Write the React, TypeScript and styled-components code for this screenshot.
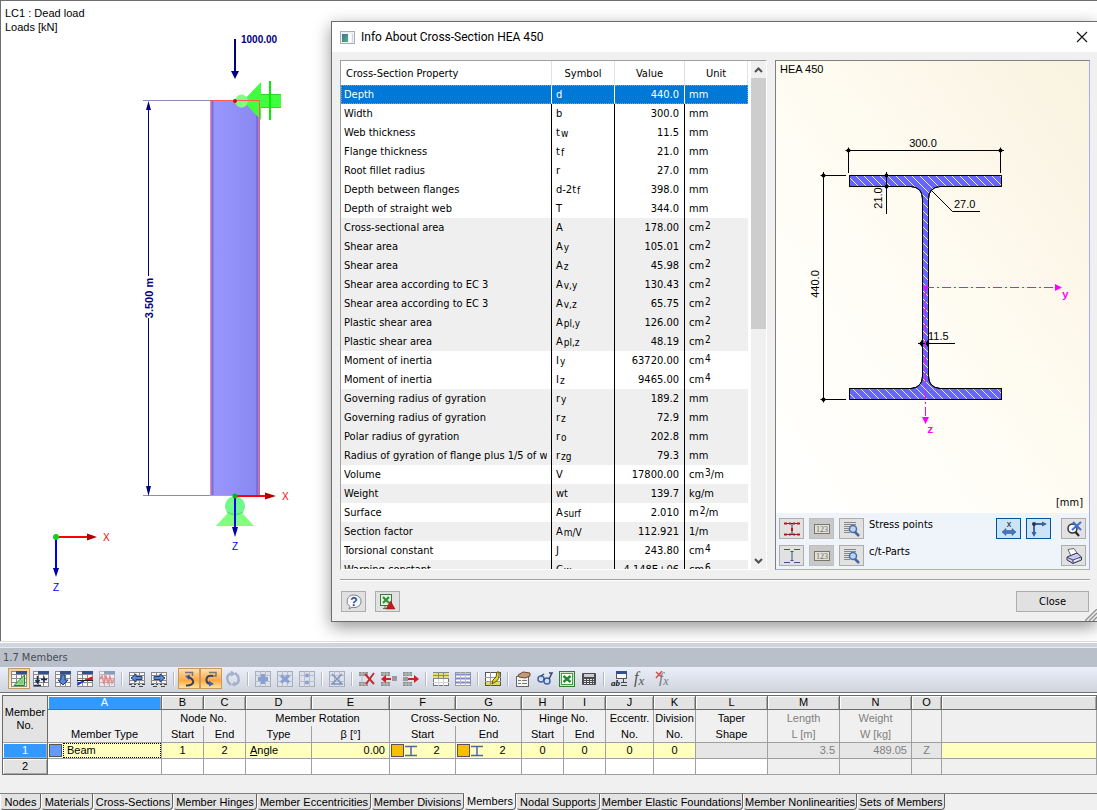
import React from "react";
import styled, { createGlobalStyle, css } from "styled-components";

const UI = `"DejaVu Sans Condensed", "DejaVu Sans", sans-serif`;
const ARIAL = `"Liberation Sans", Arial, sans-serif`;
const TITLE = `Roboto, "Open Sans", sans-serif`;

const GlobalStyle = createGlobalStyle`
  *, *::before, *::after { box-sizing: border-box; }
  body { margin: 0; background: #f0f0f0; color: #000; font-family: ${ARIAL}; font-size: 11px; }
  button { font: inherit; color: inherit; margin: 0; padding: 0; }
  svg { display: block; flex: none; }
`;

const Page = styled.div`
  display: flex;
  flex-direction: column;
  min-height: 100vh;
  overflow: hidden;
`;

/* ---------- model window ---------- */

const ModelWindow = styled.main`
  position: relative;
  flex: 1;
  background: #fff;
  border-top: 1px solid #6e6e6e;
  border-left: 1px solid #6e6e6e;
`;

const LoadCase = styled.p`
  margin: 0;
  padding: 5px 0 0 4px;
  line-height: 14px;
`;

const axisText = { fontFamily: ARIAL, fontSize: 10 };

function ModelView() {
  return (
    <svg width="330" height="606" viewBox="1 34 330 606">
      <defs>
        <linearGradient id="column" x1="0" x2="1" y1="0" y2="0">
          <stop offset="0" stopColor="#9898fc" />
          <stop offset="0.5" stopColor="#9090f8" />
          <stop offset="1" stopColor="#8787ee" />
        </linearGradient>
      </defs>
      <path d="M143 100.500H210M143 495.500H210" stroke="#8c8cb4" fill="none" />
      <rect x="210" y="101" width="50" height="395" fill="url(#column)" />
      <path d="M212.500 101V495M257 101V495" stroke="#7272dc" strokeWidth="2" />
      <path d="M210.500 100V496M210 495.500H260" stroke="#ff7f9f" fill="none" />
      <path d="M148.500 103V276M148.500 318V493" stroke="#000080" />
      <path d="M148.500 101L146 110H151ZM148.500 496L146 486H151Z" fill="#000080" />
      <text x="153" y="298" transform="rotate(-90 153 298)" textAnchor="middle" fontFamily={ARIAL} fontSize="11" fontWeight="bold" fill="#000080">3.500 m</text>
      <path d="M235 39V73" stroke="#000080" strokeWidth="2" />
      <path d="M231 71H239L235 79Z" fill="#000080" />
      <text x="241" y="43" fontFamily={ARIAL} fontSize="10" fontWeight="bold" fill="#000080">1000.00</text>
      <path d="M243 101L261 82V120Z" fill="#3fff3f" />
      <rect x="261" y="94" width="20" height="14" fill="#3fff3f" />
      <path d="M261 94.500H281M261 107.500H281" stroke="#32d832" />
      <path d="M270 81V120" stroke="#00f000" strokeWidth="2" />
      <circle cx="241.500" cy="101" r="6.500" fill="#80ff80" />
      <path d="M210 100.500H259.500V496" stroke="#ff5a5a" fill="none" />
      <circle cx="235" cy="101" r="2" fill="#c01010" />
      <path d="M235 505L216 526H254Z" fill="#80ff80" />
      <circle cx="235" cy="506" r="10" fill="#72f88a" />
      <path d="M227 512Q235 517 243 512" stroke="#40e060" fill="none" />
      <path d="M235 496H266" stroke="#f00" strokeWidth="2" />
      <path d="M265 492.500L276 496L265 499.500Z" fill="#b00000" />
      <path d="M235 496V530" stroke="#00f" strokeWidth="2" />
      <path d="M232 527H238L235 537Z" fill="#0000b0" />
      <circle cx="235" cy="496" r="2.500" fill="#10b020" />
      <text x="282" y="500" style={axisText} fill="#f00">X</text>
      <text x="232" y="550" style={axisText} fill="#00f">Z</text>
      <path d="M56 537H88" stroke="#f00" strokeWidth="2" />
      <path d="M87 533.500L97 537L87 540.500Z" fill="#b00000" />
      <path d="M56 537V570" stroke="#00f" strokeWidth="2" />
      <path d="M53 568H59L56 577Z" fill="#0000b0" />
      <circle cx="56" cy="537" r="3" fill="#10d020" />
      <text x="103" y="541" style={axisText} fill="#f00">X</text>
      <text x="53" y="591" style={axisText} fill="#00f">Z</text>
    </svg>
  );
}

/* ---------- dialog ---------- */

const Dialog = styled.section`
  position: absolute;
  top: 20px;
  left: 330px;
  right: 0;
  bottom: 19px;
  display: flex;
  flex-direction: column;
  background: #f0f0f0;
  border: 1px solid #6c6c6c;
  border-right: 0;
  box-shadow: 0 5px 16px rgba(0, 0, 0, 0.42);
  font-family: ${UI};
`;

const TitleBar = styled.header`
  display: flex;
  align-items: center;
  gap: 6px;
  height: 30px;
  flex: none;
  padding: 0 9px 0 8px;
  background: #fff;
`;

const Title = styled.h1`
  flex: 1;
  margin: 0;
  font: 12px ${TITLE};
`;

const PlainButton = styled.button`
  display: grid;
  place-items: center;
  border: 0;
  background: none;
`;

const DialogBody = styled.div`
  display: flex;
  gap: 8px;
  flex: 1;
  min-height: 0;
  padding: 8px 7px 9px 8px;
`;

const PropertyPane = styled.div`
  display: flex;
  width: 427px;
  flex: none;
  background: #fff;
  border-top: 1px solid #a0a0a0;
  border-left: 1px solid #a0a0a0;
  border-right: 1px solid #fff;
  border-bottom: 1px solid #fff;
`;

const TableClip = styled.div`
  flex: 1;
  overflow: hidden;
`;

const PropertyTable = styled.table`
  width: 407px;
  table-layout: fixed;
  border-collapse: separate;
  border-spacing: 0;
  line-height: 18px;
  white-space: nowrap;
  th {
    height: 24px;
    padding: 1px 0 0;
    font-weight: normal;
    border-right: 1px solid #e2e2e2;
  }
  th:first-child { text-align: left; padding-left: 5px; }
`;

const PropertyRow = styled.tr<{ $shaded?: boolean; $selected?: boolean }>`
  background: ${(p) => (p.$shaded ? "#efefef" : "#fff")};
  td {
    height: 19px;
    padding: 1px 4px 0;
    border-right: 1px solid #000;
  }
  td:first-child { padding-left: 3px; }
  td:nth-child(3) { text-align: right; padding-right: 5px; }
  td:last-child { border-right: 0; }
  ${(p) =>
    p.$selected &&
    css`
      background: #0078d7;
      color: #fff;
      td {
        border-right-color: #fff;
        border-top: 1px dotted #e8873a;
        border-bottom: 1px dotted #e8873a;
        line-height: 16px;
      }
      td:first-child { border-left: 1px dotted #e8873a; padding-left: 2px; }
      td:last-child { border-right: 1px dotted #e8873a; }
    `}
`;

const CellClip = styled.div`
  overflow: hidden;
`;

const Sub = styled.sub`
  margin-left: 1px;
  font-size: 10px;
  line-height: 1;
  vertical-align: -1px;
`;

const Sup = styled.sup`
  margin-left: 1px;
  font-size: 10px;
  line-height: 1;
  vertical-align: 2px;
`;

const ScrollBar = styled.div`
  display: flex;
  flex-direction: column;
  width: 15px;
  margin-left: 3px;
  background: #f0f0f0;
`;

const ScrollButton = styled(PlainButton)`
  height: 17px;
  flex: none;
`;

const ScrollTrack = styled.div`
  flex: 1;
`;

const ScrollThumb = styled.div`
  height: 53%;
  background: #cdcdcd;
`;

const SectionPane = styled.div`
  display: flex;
  flex-direction: column;
  flex: 1;
  min-width: 0;
  border: 1px solid #a9ace8;
  border-top-color: #808080;
  border-left-color: #808080;
`;

const SectionCanvas = styled.div`
  flex: 1;
  min-height: 0;
  overflow: hidden;
  background: linear-gradient(to top right, #ffffff 0%, #fffdf4 45%, #f9f2e0 100%);
`;

const SectionTools = styled.div`
  display: flex;
  justify-content: space-between;
  flex: none;
  padding: 5px 3px 3px;
  background: #eff3fa;
`;

const ToolGrid = styled.div<{ $cols: string }>`
  display: grid;
  grid-template-columns: ${(p) => p.$cols};
  gap: 6px 5px;
`;

const ToolLabel = styled.span`
  line-height: 13px;
`;

const IconButton = styled.button<{ $on?: boolean; $dim?: boolean }>`
  display: grid;
  place-items: center;
  width: 25px;
  height: 21px;
  border: 1px solid ${(p) => (p.$on ? "#00559b" : p.$dim ? "#bfbfbf" : "#adadad")};
  background: ${(p) => (p.$on ? "#cce4f7" : p.$dim ? "#c8c8c8" : "#e1e1e1")};
`;

const DialogFooter = styled.footer`
  display: flex;
  gap: 9px;
  flex: none;
  margin: 0 7px 0 8px;
  padding: 11px 1px 9px;
  border-top: 1px solid #a0a0a0;
  box-shadow: inset 0 1px 0 #fff;
`;

const CloseButton = styled.button`
  width: 73px;
  height: 21px;
  margin-left: auto;
  border: 1px solid #adadad;
  background: #e1e1e1;
`;

const Grip = styled.div`
  position: absolute;
  right: 0;
  bottom: 0;
`;

type Prop = [string, React.ReactNode, string, React.ReactNode, boolean];

const cm = (n: number) => <>cm<Sup>{n}</Sup></>;
const sy = (a: string, b: string) => <>{a}<Sub>{b}</Sub></>;

const properties: Prop[] = [
  ["Depth", "d", "440.0", "mm", false],
  ["Width", "b", "300.0", "mm", false],
  ["Web thickness", sy("t", "w"), "11.5", "mm", false],
  ["Flange thickness", sy("t", "f"), "21.0", "mm", false],
  ["Root fillet radius", "r", "27.0", "mm", false],
  ["Depth between flanges", sy("d-2t", "f"), "398.0", "mm", false],
  ["Depth of straight web", "T", "344.0", "mm", false],
  ["Cross-sectional area", "A", "178.00", cm(2), true],
  ["Shear area", sy("A", "y"), "105.01", cm(2), true],
  ["Shear area", sy("A", "z"), "45.98", cm(2), true],
  ["Shear area according to EC 3", sy("A", "v,y"), "130.43", cm(2), true],
  ["Shear area according to EC 3", sy("A", "v,z"), "65.75", cm(2), true],
  ["Plastic shear area", sy("A", "pl,y"), "126.00", cm(2), true],
  ["Plastic shear area", sy("A", "pl,z"), "48.19", cm(2), true],
  ["Moment of inertia", sy("I", "y"), "63720.00", cm(4), false],
  ["Moment of inertia", sy("I", "z"), "9465.00", cm(4), false],
  ["Governing radius of gyration", sy("r", "y"), "189.2", "mm", true],
  ["Governing radius of gyration", sy("r", "z"), "72.9", "mm", true],
  ["Polar radius of gyration", sy("r", "o"), "202.8", "mm", true],
  ["Radius of gyration of flange plus 1/5 of web", sy("r", "zg"), "79.3", "mm", true],
  ["Volume", "V", "17800.00", <>cm<Sup>3</Sup>/m</>, false],
  ["Weight", "wt", "139.7", "kg/m", true],
  ["Surface", sy("A", "surf"), "2.010", <>m<Sup>2</Sup>/m</>, false],
  ["Section factor", sy("A", "m/V"), "112.921", "1/m", true],
  ["Torsional constant", "J", "243.80", cm(4), false],
  ["Warping constant", sy("C", "w"), "4.148E+06", cm(6), true],
];

function DimPoint({ x, y }: { x: number; y: number }) {
  return (
    <g>
      <path d={`M${x - 3} ${y}H${x + 3}M${x} ${y - 3}V${y + 3}`} stroke="#000" />
      <circle cx={x} cy={y} r="2" fill="#000" />
    </g>
  );
}

function SectionDrawing() {
  return (
    <svg width="100%" height="100%" viewBox="776 61 313 452" fontFamily={ARIAL} fontSize="11">
      <defs>
        <pattern id="hatch" width="8" height="8" patternUnits="userSpaceOnUse">
          <path d="M-1 -1L9 9M-1 7L1 9M7 -1L9 1" stroke="#e4e4ff" strokeWidth="1" />
        </pattern>
      </defs>
      <text x="780" y="73">HEA 450</text>
      {["#6666ff", "url(#hatch)"].map((fill) => (
        <path
          key={fill}
          d="M849.500 175.500H1001.500V186.500H940Q928.500 187.500 928.500 199V376Q928.500 387.500 940 388.500H1001.500V399.500H849.500V388.500H911Q922.500 387.500 922.500 376V199Q922.500 187.500 911 186.500H849.500Z"
          fill={fill}
          stroke="#000"
        />
      ))}
      <g stroke="#000" fill="none">
        <path d="M846 150.500H1004M848.500 150V173M1000.500 150V173" />
        <path d="M823.500 172V402M823 175.500H846M823 399.500H846" />
        <path d="M886.500 172V214" />
        <path d="M931 190L952.500 211.500H980" />
        <path d="M918 343.500H955" />
      </g>
      <DimPoint x={848.5} y={150.5} />
      <DimPoint x={1000.5} y={150.5} />
      <DimPoint x={823.5} y={175.5} />
      <DimPoint x={823.5} y={399.5} />
      <DimPoint x={886.5} y={175.5} />
      <DimPoint x={886.5} y={186.5} />
      <DimPoint x={921.5} y={343.5} />
      <DimPoint x={927.5} y={343.5} />
      <text x="923" y="147" textAnchor="middle">300.0</text>
      <text x="819" y="284" textAnchor="middle" transform="rotate(-90 819 284)">440.0</text>
      <text x="882" y="198" textAnchor="middle" transform="rotate(-90 882 198)">21.0</text>
      <text x="954" y="208">27.0</text>
      <text x="928" y="340">11.5</text>
      <g stroke="#f0f" strokeDasharray="9 3 2 3">
        <path d="M925 287.500H1055" />
        <path d="M925.500 288V417" />
      </g>
      <circle cx="925.500" cy="287.500" r="2" fill="#f0f" />
      <path d="M1055 284L1062 287.500L1055 291ZM922 417H929L925.500 424Z" fill="#f0f" />
      <g fill="#f0f" fontFamily="'Liberation Mono', monospace" fontWeight="bold" fontSize="11">
        <text x="1062" y="298">y</text>
        <text x="927" y="433">z</text>
      </g>
      <text x="1083" y="506" textAnchor="end" fontFamily={UI}>[mm]</text>
    </svg>
  );
}

const Ic = ({ children, size = 16 }: { children: React.ReactNode; size?: number }) => (
  <svg width={size} height="16" viewBox={`0 0 ${size} 16`} fill="none">{children}</svg>
);

const StressPointsIcon = () => (
  <Ic>
    <path d="M1 2.500H15M1 13.500H15M8 3V13" stroke="#303860" />
    <path d="M0 1.500h3v2h-3zM5 1.500h2v2h-2zM9 1.500h2v2h-2zM13 1.500h3v2h-3zM0 12.500h3v2h-3zM5 12.500h2v2h-2zM9 12.500h2v2h-2zM13 12.500h3v2h-3zM7 7h2v3h-2z" fill="#d01010" />
  </Ic>
);
const PartsIcon = () => (
  <Ic><path d="M0 1.500H6M10 1.500H16M0 14.500H6M10 14.500H16M8 4V12M6.500 3.500H9.500M6.500 12.500H9.500" stroke="#405080" /></Ic>
);
const NumbersIcon = () => (
  <Ic>
    <rect x="0.500" y="3.500" width="15" height="9" fill="#e2e2da" stroke="#77776f" />
    <text x="8" y="11" textAnchor="middle" fontSize="8" fontFamily="'Liberation Serif', serif" fill="#66665f">123</text>
  </Ic>
);
const DetailIcon = () => (
  <Ic>
    <path d="M0 1.500H12M0 3.500H12M0 5.500H6M0 7.500H5M0 9.500H5M0 11.500H6" stroke="#888" />
    <circle cx="9" cy="8" r="3.500" fill="#b8d4f4" stroke="#4c6ea8" strokeWidth="1.500" />
    <path d="M11 11L15 15" stroke="#4a63a0" strokeWidth="2.500" />
  </Ic>
);
const WidthIcon = () => (
  <Ic>
    <text x="8" y="6" textAnchor="middle" fontSize="9" fontFamily={ARIAL} fill="#111">x</text>
    <path d="M1 11L5 7.500V9.500H11V7.500L15 11L11 14.500V12.500H5V14.500Z" fill="#4a74b8" stroke="#2f4f8c" strokeWidth="0.500" />
  </Ic>
);
const AxesIcon = () => (
  <Ic>
    <path d="M3 3H12M3 3V12" stroke="#3f64a8" strokeWidth="2" />
    <path d="M11 0.500L16 3L11 5.500ZM0.500 11L3 16L5.500 11Z" fill="#3f5f98" />
    <circle cx="3" cy="3" r="2" fill="#334" />
  </Ic>
);
const ZoomResetIcon = () => (
  <Ic>
    <circle cx="6.500" cy="7.500" r="4.500" fill="#f4f8ff" stroke="#333" strokeWidth="1.500" />
    <path d="M9.500 11L13 15" stroke="#222" strokeWidth="2" />
    <path d="M7 1L15 9M15 1L6 9" stroke="#3f6fd0" strokeWidth="2" />
  </Ic>
);
const PrinterIcon = () => (
  <Ic>
    <path d="M2 1.500L8 0.500L11 5L5 8Z" fill="#fff" stroke="#667" />
    <path d="M1 9L11 5L15.500 9V12L7 15.500L1 12Z" fill="#c9c9f4" stroke="#334" />
    <path d="M1.500 9.500L7 12L15 9M7 12V15" stroke="#446" />
    <path d="M8 13L13 11" stroke="#fff" />
  </Ic>
);
const HelpIcon = () => (
  <Ic>
    <path d="M8 1A7 6.300 0 1 1 6 13.300L3 15L4 12.500A7 6.300 0 0 1 8 1Z" fill="#f6f8fc" stroke="#7c8088" />
    <text x="8" y="12" textAnchor="middle" fontSize="12" fontWeight="bold" fontFamily={ARIAL} fill="#2b4a8c">?</text>
  </Ic>
);
const ExportIcon = () => (
  <Ic>
    <rect x="0.500" y="0.500" width="11" height="11" fill="#e4f2e0" stroke="#3d7a3d" />
    <path d="M3 3L9 9M9 3L3 9" stroke="#2f8a3a" strokeWidth="2" />
    <path d="M6 15L10.500 7L15 15Z" fill="#c81818" stroke="#801010" strokeWidth="0.500" />
    <path d="M5 11.500V14M3 14.500H6" stroke="#3d7a3d" />
  </Ic>
);

function CrossSectionDialog() {
  return (
    <Dialog role="dialog" aria-labelledby="dialog-title">
      <TitleBar>
        <svg width="15" height="13" viewBox="0 0 15 13">
          <defs>
            <linearGradient id="app-icon" x1="0" x2="1" y1="0" y2="1">
              <stop offset="0" stopColor="#3f6fa8" />
              <stop offset="1" stopColor="#58b06c" />
            </linearGradient>
          </defs>
          <rect x="0.500" y="0.500" width="14" height="12" fill="#eef2f6" stroke="#a9aeb6" />
          <rect x="2" y="3" width="6" height="8" fill="url(#app-icon)" />
          <rect x="9" y="3" width="2" height="8" fill="#fff" />
          <rect x="12" y="3" width="1" height="8" fill="#cdd6e2" />
        </svg>
        <Title id="dialog-title">Info About Cross-Section HEA 450</Title>
        <PlainButton aria-label="Close window">
          <svg width="12" height="12" viewBox="0 0 12 12"><path d="M1 1L11 11M11 1L1 11" stroke="#111" strokeWidth="1.100" /></svg>
        </PlainButton>
      </TitleBar>
      <DialogBody>
        <PropertyPane>
          <TableClip>
            <PropertyTable>
              <colgroup>
                <col style={{ width: 211 }} />
                <col style={{ width: 63 }} />
                <col style={{ width: 70 }} />
                <col />
              </colgroup>
              <thead>
                <tr><th>Cross-Section Property</th><th>Symbol</th><th>Value</th><th>Unit</th></tr>
              </thead>
              <tbody>
                {properties.map(([name, symbol, value, unit, shaded], i) => (
                  <PropertyRow key={i} $shaded={shaded} $selected={i === 0}>
                    <td><CellClip>{name}</CellClip></td>
                    <td>{symbol}</td>
                    <td>{value}</td>
                    <td>{unit}</td>
                  </PropertyRow>
                ))}
              </tbody>
            </PropertyTable>
          </TableClip>
          <ScrollBar>
            <ScrollButton aria-label="Scroll up">
              <svg width="9" height="6" viewBox="0 0 9 6"><path d="M1 5L4.500 1.500L8 5" stroke="#505050" strokeWidth="2" fill="none" /></svg>
            </ScrollButton>
            <ScrollTrack><ScrollThumb /></ScrollTrack>
            <ScrollButton aria-label="Scroll down">
              <svg width="9" height="6" viewBox="0 0 9 6"><path d="M1 1L4.500 4.500L8 1" stroke="#505050" strokeWidth="2" fill="none" /></svg>
            </ScrollButton>
          </ScrollBar>
        </PropertyPane>
        <SectionPane>
          <SectionCanvas><SectionDrawing /></SectionCanvas>
          <SectionTools>
            <ToolGrid $cols="25px 25px 25px auto">
              <IconButton aria-label="Show stress points"><StressPointsIcon /></IconButton>
              <IconButton aria-label="Stress point numbers" $dim><NumbersIcon /></IconButton>
              <IconButton aria-label="Stress point details"><DetailIcon /></IconButton>
              <ToolLabel>Stress points</ToolLabel>
              <IconButton aria-label="Show c/t-parts"><PartsIcon /></IconButton>
              <IconButton aria-label="Part numbers" $dim><NumbersIcon /></IconButton>
              <IconButton aria-label="Part details"><DetailIcon /></IconButton>
              <ToolLabel>c/t-Parts</ToolLabel>
            </ToolGrid>
            <ToolGrid $cols="25px 30px 25px">
              <IconButton aria-label="Show dimensions" $on><WidthIcon /></IconButton>
              <IconButton aria-label="Show axes" $on><AxesIcon /></IconButton>
              <IconButton aria-label="Reset zoom"><ZoomResetIcon /></IconButton>
              <span />
              <span />
              <IconButton aria-label="Print"><PrinterIcon /></IconButton>
            </ToolGrid>
          </SectionTools>
        </SectionPane>
      </DialogBody>
      <DialogFooter>
        <IconButton aria-label="Help"><HelpIcon /></IconButton>
        <IconButton aria-label="Export to spreadsheet"><ExportIcon /></IconButton>
        <CloseButton>Close</CloseButton>
      </DialogFooter>
      <Grip>
        <svg width="12" height="12" viewBox="0 0 12 12">
          <path d="M0 12L12 0M4 12L12 4M8 12L12 8" stroke="#909090" strokeWidth="1.400" />
        </svg>
      </Grip>
    </Dialog>
  );
}

/* ---------- tool bar ---------- */

const Panel = styled.section`
  flex: none;
  border-top: 1px solid #dcdde0;
  background: #f0f0f0;
`;

const Splitter = styled.div`
  height: 6px;
  background: #d0d4df;
  border-top: 1px solid #fff;
  border-bottom: 1px solid #e9ebf2;
`;

const PanelTitle = styled.h2`
  margin: 0;
  padding-left: 3px;
  background: #b9c0ca;
  color: #484c54;
  font: 11px/19px ${UI};
`;

const ToolBar = styled.div`
  display: flex;
  align-items: flex-start;
  height: 26px;
  padding: 1px 0 0 8px;
  background: linear-gradient(#eaeef9, #d0d4dd);
  border-bottom: 1px solid #707070;
`;

const Tool = styled.button<{ $tone?: "pale" | "warm" }>`
  display: grid;
  place-items: center;
  width: 22px;
  height: 21px;
  border: 1px solid transparent;
  background: none;
  ${(p) =>
    p.$tone &&
    css`
      border-color: #c29a62;
      background: ${p.$tone === "warm"
        ? "linear-gradient(#fde0b8, #ffbe6e 35%, #ffa940 60%, #ffe49c)"
        : "linear-gradient(#f0cf9c, #fdf0d4)"};
    `}
`;

const ToolSeparator = styled.span`
  width: 8px;
  height: 14px;
  margin-top: 4px;
  background: linear-gradient(90deg, transparent 3px, #b4b9c4 3px, #b4b9c4 4px, #fff 4px, #fff 5px, transparent 5px);
`;

const Grid = ({ faded, lines = "#8a8a8a" }: { faded?: boolean; lines?: string }) => (
  <g opacity={faded ? 0.5 : 1}>
    <rect x="0.500" y="0.500" width="15" height="15" fill="#f8f8f8" stroke={lines} />
    <path d="M0 3.500H16M0 7.500H16M0 11.500H16M5.500 0V16M10.500 3V16" stroke={lines} />
    <rect x="5" y="0" width="11" height="3" fill="#33508c" />
  </g>
);

const FilmGrid = () => (
  <>
    <rect x="0.500" y="1.500" width="15" height="11" fill="#f6f6f6" stroke="#888" />
    <path d="M0 4.500H16M0 9.500H16M5.500 1V13M10.500 1V13" stroke="#888" />
    <path d="M0 13.500H3M5 13.500H7M9 13.500H11M13 13.500H16M2 15.500H6M10 15.500H14" stroke="#444" />
  </>
);

const PaleGrid = () => (
  <>
    <rect x="0.500" y="0.500" width="15" height="15" fill="#dde1ea" stroke="#a8adb8" />
    <path d="M0 4.500H16M0 10.500H16M5.500 0V16M10.500 0V16" stroke="#b8bdc8" />
  </>
);

const RowStub = () => (
  <>
    <path d="M0 1H9V5H0ZM0 11H9V15H0Z" fill="#8d8d8d" />
    <path d="M0 3H9M0 13H9M3 1V15M6 1V5M6 11V15" stroke="#bbb" />
  </>
);

const tools: (null | { name: string; tone?: "pale" | "warm"; icon: React.ReactNode })[] = [
  { name: "Graphic input", tone: "pale", icon: <><Grid /><path d="M3 14.500L13.500 4V14.500Z" fill="#8fe08f" stroke="#2f7f2f" /><path d="M8.500 12H11V9.500Z" fill="#f4fff4" stroke="#2f7f2f" strokeWidth="0.500" /></> },
  { name: "Insert values", icon: <><Grid /><path d="M4.500 5V11M2.500 9L4.500 12L6.500 9M1 14.500H8M8 8.500H14M11 5.500V11.500" stroke="#1d2c50" strokeWidth="1.500" /></> },
  { name: "Apply to model", icon: <><Grid /><path d="M6 4H10V9H13L8 14L3 9H6Z" fill="#5b86d4" stroke="#23417f" /></> },
  { name: "Diagram", icon: <><Grid /><path d="M1 14L1 12L7 10Z" fill="#1030e0" stroke="#1030e0" /><path d="M8 9L15 6V9Z" fill="#e01818" stroke="#e01818" /><path d="M0 9.500H16" stroke="#222" /></> },
  { name: "Oscillation", icon: <><Grid faded /><path d="M0 9L3 5L5 13L7 5L9 12L11 6L13 12L15 8" stroke="#e88a8a" strokeWidth="1.500" /></> },
  null,
  { name: "Previous table", icon: <><FilmGrid /><path d="M2 7L7 3V5.500H13V8.500H7V11Z" fill="#5b86d4" stroke="#23417f" /></> },
  { name: "Next table", icon: <><FilmGrid /><path d="M14 7L9 3V5.500H3V8.500H9V11Z" fill="#5b86d4" stroke="#23417f" /></> },
  null,
  { name: "Redo selection", tone: "warm", icon: <><path d="M4 1.500H11.500V5" stroke="#777" strokeWidth="1.500" /><path d="M4 5L9 3.500L8 9Z" fill="#3f68b4" /><path d="M7 6Q13 8 12 12Q10 15 5 14.500" stroke="#33435f" strokeWidth="2" /></> },
  { name: "Sync selection", tone: "warm", icon: <><path d="M6 1.500H13V5H9" stroke="#777" strokeWidth="1.500" /><path d="M10 5Q4 4 3.500 8Q3 12 7 13" stroke="#33435f" strokeWidth="2" /><path d="M6 9.500L11 13L6 15.500Z" fill="#3f68b4" /></> },
  { name: "Refresh", icon: <g stroke="#a4b0c8" strokeWidth="2.500"><path d="M8 2Q1 3 2.500 9Q3 12 6 14" /><path d="M8 14Q15 13 13.500 7Q13 4 10 2" /><path d="M6 0L9 3L6 5M10 11L7 14" strokeWidth="1.500" /></g> },
  null,
  { name: "Add row", icon: <><PaleGrid /><path d="M8 3V13M3 8H13" stroke="#8aa0d4" strokeWidth="4" /></> },
  { name: "Multiply row", icon: <><PaleGrid /><path d="M4 4.500L12 11.500M12 4.500L4 11.500" stroke="#8aa0d4" strokeWidth="3" /></> },
  { name: "Divide row", icon: <><PaleGrid /><circle cx="8" cy="4.500" r="2" fill="#8aa0d4" /><circle cx="8" cy="11.500" r="2" fill="#8aa0d4" /></> },
  null,
  { name: "Clear table", icon: <><PaleGrid /><path d="M3 3L13 13M13 3L3 13M2 13H14" stroke="#7f92bf" strokeWidth="1.500" /></> },
  null,
  { name: "Delete row", icon: <><RowStub /><path d="M6 3L15 13M15 2L7 13" stroke="#c03030" strokeWidth="2" /></> },
  { name: "Insert row left", icon: <><RowStub /><path d="M3 8H10" stroke="#d02020" strokeWidth="2" /><path d="M0 8L5 4V12Z" fill="#d02020" /><rect x="11" y="5" width="5" height="5" fill="#9a9a9a" /></> },
  { name: "Insert row right", icon: <><RowStub /><path d="M5 8H13" stroke="#d02020" strokeWidth="2" /><path d="M16 8L11 4V12Z" fill="#d02020" /><rect x="0" y="6" width="5" height="4" fill="#9a9a9a" /></> },
  null,
  { name: "Highlight header", icon: <><rect x="0.500" y="1.500" width="15" height="13" fill="#fff" stroke="#777" /><rect x="0" y="1" width="16" height="6" fill="#e8df6c" /><path d="M0 1.500H16M0 4.500H16M0 7.500H16M5.500 1V7M10.500 1V7" stroke="#888" /><path d="M0 11.500H16M5.500 8V15M10.500 8V15" stroke="#d4d4d4" /></> },
  { name: "Highlight rows", icon: <><rect x="0.500" y="1.500" width="15" height="13" fill="#fff" stroke="#999" /><path d="M0 3.500H16M0 7.500H16M0 11.500H16" stroke="#8088c8" strokeWidth="2" /><path d="M5.500 1V15M10.500 1V15" stroke="#b8b8c8" /></> },
  null,
  { name: "Mark row", icon: <><rect x="0.500" y="1.500" width="15" height="13" fill="#fff" stroke="#555" /><path d="M1 11H15V14H1Z" fill="#e0d860" /><path d="M0 6.500H16M0 10.500H16M5.500 1V15" stroke="#999" /><path d="M12 1H14Q15 9 10 11L7 13L8 9Q12 7 12 1Z" fill="#e4d428" stroke="#5c5410" /></> },
  null,
  { name: "Table properties", icon: <><rect x="1.500" y="5.500" width="12" height="10" fill="#f4f4f4" stroke="#666" /><path d="M3 9.500H6M7 9.500H12M3 12.500H6M7 12.500H12" stroke="#777" /><path d="M3 4L8 1L15 2V5L10 7L4 6Z" fill="#c49a78" stroke="#6b4c38" /></> },
  { name: "Find", icon: <g stroke="#4563a8"><circle cx="4" cy="8" r="3" fill="#cfe0f8" strokeWidth="1.500" /><circle cx="10" cy="10" r="3" fill="#cfe0f8" strokeWidth="1.500" /><path d="M4 5L7 3M12 8L15 2H12M7 8H8" stroke="#3a4668" strokeWidth="1.500" /></g> },
  { name: "Export to Excel", icon: <><rect x="0.500" y="0.500" width="15" height="15" fill="#cfe6cb" stroke="#2e7d32" /><rect x="2.500" y="2.500" width="11" height="11" fill="#fff" stroke="#4c9a4c" /><path d="M4.500 5L11.500 11M11.500 5L4.500 11" stroke="#248a30" strokeWidth="2.500" /></> },
  { name: "Calculator", icon: <><rect x="1" y="2" width="14" height="12" rx="1" fill="#4c4c50" /><rect x="3" y="3" width="10" height="3" fill="#c8ccd0" /><path d="M3 8.500H13M3 10.500H13M3 12.500H13" stroke="#e8e8e8" strokeDasharray="2 1" /></> },
  null,
  { name: "Parameters", icon: <><rect x="5.500" y="0.500" width="10" height="7" fill="#f4f4f4" stroke="#555" /><rect x="5" y="0" width="11" height="3" fill="#33508c" /><path d="M12.500 8V11M10 11.500H16M10 14.500H16" stroke="#444" /><text x="0" y="15" fontSize="9" fontStyle="italic" fontWeight="bold" fontFamily="'Liberation Serif', serif" fill="#111">ab</text></> },
  { name: "Edit formula", icon: <text x="1" y="12" fontSize="16" fontStyle="italic" fontFamily="'Liberation Serif', serif" fill="#555">f<tspan fontSize="13" dy="2">x</tspan></text> },
  { name: "Delete formula", icon: <><text x="4" y="12" fontSize="15" fontStyle="italic" fontFamily="'Liberation Serif', serif" fill="#777">f<tspan fontSize="12" dy="2">x</tspan></text><path d="M1 1L7 6M7 0L1 7" stroke="#cc5050" strokeWidth="1.500" /></> },
];

/* ---------- members table ---------- */

const SheetArea = styled.div`
  padding: 2px 0 18px 2px;
  background: linear-gradient(#fff 2px, #f0f0f0 2px);
`;

const Sheet = styled.table`
  width: 100%;
  table-layout: fixed;
  border-collapse: separate;
  border-spacing: 0;
  border-top: 1px solid #6a6a6a;
  border-left: 1px solid #6a6a6a;
  white-space: nowrap;
  line-height: 13px;
  font-size: 11px;
  th, td { padding: 0; font-weight: normal; text-align: center; }
`;

const CornerHead = styled.th`
  height: 47px;
  vertical-align: middle;
  border-right: 1px solid #6a6a6a;
  border-bottom: 1px solid #a0a0a0;
  background: #e3e3e3;
`;

const LetterHead = styled.th<{ $active?: boolean }>`
  height: 14px;
  border-right: 1px solid #6a6a6a;
  border-bottom: 1px solid #6a6a6a;
  background: ${(p) => (p.$active ? "#3399ff" : "#e3e3e3")};
  color: ${(p) => (p.$active ? "#fff" : "#000")};
  box-shadow: inset 1px 1px 0 #fff, inset -1px 0 0 #a8a8a8;
`;

const HeadCell = styled.th<{ $bottom?: boolean; $muted?: boolean; $joined?: boolean }>`
  height: ${(p) => (p.$bottom ? 17 : 16)}px;
  border-right: 1px solid #a0a0a0;
  border-bottom: ${(p) => (p.$bottom ? "1px solid #a0a0a0" : "0")};
  color: ${(p) => (p.$muted ? "#808080" : "#000")};
`;

const RowHead = styled.th<{ $active?: boolean }>`
  height: 16px;
  border-right: 1px solid #6a6a6a;
  border-bottom: 1px solid #6a6a6a;
  background: ${(p) => (p.$active ? "#3399ff" : "#e3e3e3")};
  color: ${(p) => (p.$active ? "#fff" : "#000")};
  box-shadow: inset 1px 1px 0 #fff, inset -1px -1px 0 #a8a8a8;
`;

const Cell = styled.td<{ $bg: string; $muted?: boolean; $align?: string }>`
  && { text-align: ${(p) => p.$align || "center"}; }
  && { padding: ${(p) => (p.$align ? "0 4px" : "0")}; }
  height: 16px;
  border-right: 1px solid #a0a0a0;
  border-bottom: 1px solid #a0a0a0;
  background: ${(p) => p.$bg};
  color: ${(p) => (p.$muted ? "#808080" : "#000")};
`;

const CellContent = styled.div`
  display: flex;
  align-items: center;
  gap: 1px;
  height: 15px;
  padding-left: 1px;
`;

const Swatch = styled.span<{ $color: string }>`
  width: 13px;
  height: 13px;
  flex: none;
  background: ${(p) => p.$color};
  border: 1px solid #555;
`;

const Focused = styled.span`
  flex: 1;
  height: 15px;
  padding-left: 3px;
  text-align: left;
  border: 1px dotted #000;
`;

const SectionNumber = styled.span`
  flex: 1;
  text-align: center;
`;

const SectionRef = ({ value }: { value: string }) => (
  <CellContent>
    <Swatch $color="#f6c000" />
    <svg width="12" height="12" viewBox="0 0 12 12">
      <path d="M0 1.500H12M0 10.500H12M6 1V11" stroke="#5064a8" strokeWidth="1.500" />
    </svg>
    <SectionNumber>{value}</SectionNumber>
  </CellContent>
);

const letters = "ABCDEFGHIJKLMNO".split("");
const columnWidths = [45, 114, 42, 42, 66, 78, 66, 66, 42, 42, 48, 42, 72, 72, 72, 30];
const YELLOW = "#ffffc0";
const GRAY = "#e6e6e6";
const PLAIN = "#f0f0f0";

function MembersTable() {
  return (
    <Sheet>
      <colgroup>
        {columnWidths.map((w, i) => <col key={i} style={{ width: w }} />)}
        <col />
      </colgroup>
      <thead>
        <tr>
          <CornerHead rowSpan={3}>Member<br />No.</CornerHead>
          {letters.map((l) => <LetterHead key={l} $active={l === "A"}>{l}</LetterHead>)}
          <LetterHead />
        </tr>
        <tr>
          <HeadCell />
          <HeadCell colSpan={2}>Node No.</HeadCell>
          <HeadCell colSpan={2}>Member Rotation</HeadCell>
          <HeadCell colSpan={2}>Cross-Section No.</HeadCell>
          <HeadCell colSpan={2}>Hinge No.</HeadCell>
          <HeadCell>Eccentr.</HeadCell>
          <HeadCell>Division</HeadCell>
          <HeadCell>Taper</HeadCell>
          <HeadCell $muted>Length</HeadCell>
          <HeadCell $muted>Weight</HeadCell>
          <HeadCell />
          <HeadCell />
        </tr>
        <tr>
          {["Member Type", "Start", "End", "Type", "β [°]", "Start", "End", "Start", "End", "No.", "No.", "Shape", "L [m]", "W [kg]", "", ""].map((t, i) => (
            <HeadCell key={i} $bottom $muted={i > 11}>{t}</HeadCell>
          ))}
        </tr>
      </thead>
      <tbody>
        <tr>
          <RowHead $active>1</RowHead>
          <Cell $bg={YELLOW}>
            <CellContent><Swatch $color="#6699ff" /><Focused>Beam</Focused></CellContent>
          </Cell>
          <Cell $bg={YELLOW}>1</Cell>
          <Cell $bg={YELLOW}>2</Cell>
          <Cell $bg={YELLOW} $align="left"><u>A</u>ngle</Cell>
          <Cell $bg={YELLOW} $align="right">0.00</Cell>
          <Cell $bg={YELLOW}><SectionRef value="2" /></Cell>
          <Cell $bg={YELLOW}><SectionRef value="2" /></Cell>
          <Cell $bg={YELLOW}>0</Cell>
          <Cell $bg={YELLOW}>0</Cell>
          <Cell $bg={YELLOW}>0</Cell>
          <Cell $bg={YELLOW}>0</Cell>
          <Cell $bg={GRAY} />
          <Cell $bg={GRAY} $muted $align="right">3.5</Cell>
          <Cell $bg={GRAY} $muted $align="right">489.05</Cell>
          <Cell $bg={GRAY} $muted>Z</Cell>
          <Cell $bg={YELLOW} />
        </tr>
        <tr>
          <RowHead>2</RowHead>
          {columnWidths.map((_, i) => <Cell key={i} $bg={i < 12 ? "#fff" : PLAIN} />)}
        </tr>
      </tbody>
    </Sheet>
  );
}

/* ---------- tabs ---------- */

const TabBar = styled.nav`
  display: flex;
  height: 17px;
  border-top: 1px solid #808080;
  background: #f0f0f0;
`;

const Tab = styled.button<{ $active?: boolean; $width: number }>`
  width: ${(p) => p.$width}px;
  flex: none;
  height: ${(p) => (p.$active ? 17 : 16)}px;
  line-height: 14px;
  white-space: nowrap;
  border: 1px solid #606060;
  border-top: 0;
  border-left-color: #fafafa;
  border-radius: 0 0 4px 4px;
  background: ${(p) => (p.$active ? "#f0f0f0" : "#e3e3e3")};
  ${(p) => p.$active && "margin-top: -1px;"}
`;

const tabs: [string, number][] = [
  ["Nodes", 41], ["Materials", 52], ["Cross-Sections", 80], ["Member Hinges", 84],
  ["Member Eccentricities", 114], ["Member Divisions", 93], ["Members", 52],
  ["Nodal Supports", 84], ["Member Elastic Foundations", 143],
  ["Member Nonlinearities", 114], ["Sets of Members", 88],
];

export default function App() {
  return (
    <Page>
      <GlobalStyle />
      <ModelWindow>
        <LoadCase>LC1 : Dead load<br />Loads [kN]</LoadCase>
        <ModelView />
        <CrossSectionDialog />
      </ModelWindow>
      <Panel>
        <Splitter />
        <PanelTitle>1.7 Members</PanelTitle>
        <ToolBar>
          {tools.map((t, i) =>
            t ? (
              <Tool key={i} aria-label={t.name} $tone={t.tone}><Ic>{t.icon}</Ic></Tool>
            ) : (
              <ToolSeparator key={i} />
            )
          )}
        </ToolBar>
        <SheetArea><MembersTable /></SheetArea>
        <TabBar>
          {tabs.map(([name, width]) => (
            <Tab key={name} $width={width} $active={name === "Members"}>{name}</Tab>
          ))}
        </TabBar>
      </Panel>
    </Page>
  );
}
